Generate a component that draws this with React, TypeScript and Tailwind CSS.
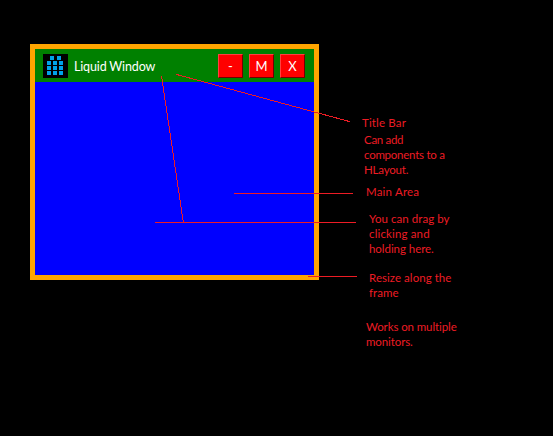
const titleButtons = ['-', 'M', 'X'];

function AppIcon() {
  return (
    <svg width="25" height="24" viewBox="0 0 25 24" shapeRendering="crispEdges" className="shrink-0">
      <rect width="25" height="24" fill="#000" />
      <g fill="#00a2e8">
        <rect x="7" y="2" width="4" height="4" />
        <rect x="14" y="2" width="4" height="4" />
        {[7, 12, 17].map((y) =>
          [4, 10, 16].map((x) => <rect key={`${x}-${y}`} x={x} y={y} width="4" height="4" />),
        )}
      </g>
    </svg>
  );
}

function LiquidWindow() {
  return (
    <div className="flex h-[236px] w-[289px] shrink-0 flex-col border-[5px] border-[#ffa500] bg-[#0000ff]">
      <div className="flex h-[33px] shrink-0 items-start bg-[#008000] pt-[5px] pr-[9px] pl-2">
        <AppIcon />
        <span className="ml-[6px] text-[12.5px] leading-[25px] tracking-[-0.15px] whitespace-nowrap text-white">
          Liquid Window
        </span>
        <div className="ml-auto flex gap-[6px]">
          {titleButtons.map((label) => (
            <button
              key={label}
              className="flex h-6 w-[25px] items-center justify-center border border-t-[#ff4040] border-r-[#700000] border-b-[#700000] border-l-[#ff4040] bg-[#ff0000] text-[13px] leading-none text-white"
            >
              {label}
            </button>
          ))}
        </div>
      </div>
      <div className="flex-1" />
    </div>
  );
}

function Notes() {
  return (
    <div className="ml-[43px] flex flex-col pt-[71px] text-[11.5px] leading-[15px] whitespace-nowrap text-[#ed1c24]">
      <p className="tracking-[0.15px]">Title Bar</p>
      <div className="mt-[2px] ml-[2px]">
        <p className="tracking-[-0.3px]">Can add</p>
        <p className="tracking-[-0.25px]">components to a</p>
        <p className="tracking-[-0.2px]">HLayout.</p>
      </div>
      <p className="mt-[7px] ml-1 tracking-[0.2px]">Main Area</p>
      <div className="mt-3 ml-[7px]">
        <p className="tracking-[0.05px]">You can drag by</p>
        <p className="tracking-[0.15px]">clicking and</p>
        <p className="tracking-[-0.05px]">holding here.</p>
      </div>
      <div className="mt-[14px] ml-[7px]">
        <p className="tracking-[0.05px]">Resize along the</p>
        <p className="tracking-[0.05px]">frame</p>
      </div>
      <div className="mt-[19px] ml-1">
        <p className="tracking-[-0.1px]">Works on multiple</p>
        <p className="tracking-[-0.1px]">monitors.</p>
      </div>
    </div>
  );
}

function Pointers() {
  return (
    <svg
      className="pointer-events-none absolute inset-0"
      width="553"
      height="436"
      shapeRendering="crispEdges"
      stroke="#ed1c24"
      fill="none"
    >
      <path d="M161.5 76L183.5 223.5" />
      <path d="M176 74.3L350 121.7" />
      <path d="M234 193.5H353" />
      <path d="M155 222.5H356" />
      <path d="M308 276.5H357" />
    </svg>
  );
}

export default function App() {
  return (
    <div className="relative flex h-[436px] w-[553px] items-start overflow-hidden bg-black pt-[44px] pl-[30px] font-['Comic_Sans_MS','Lato',sans-serif]">
      <LiquidWindow />
      <Notes />
      <Pointers />
    </div>
  );
}
